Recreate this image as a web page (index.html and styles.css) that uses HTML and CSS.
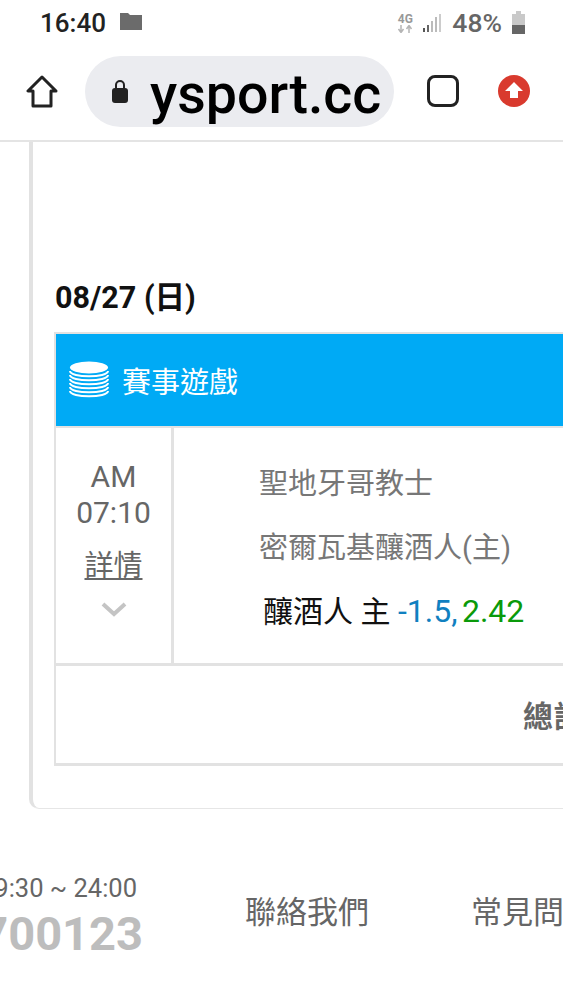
FILE: index.html
```html
<!DOCTYPE html>
<html lang="zh-Hant">
<head>
  <meta charset="UTF-8" />
  <meta name="viewport" content="width=device-width, initial-scale=1.0"/>
  <title>賽事遊戲</title>
  <link rel="stylesheet" href="styles.css">
</head>
<body>
  <div class="status-bar">
    <span class="clock">16:40</span>
    <svg class="folder" width="22" height="18" viewBox="0 0 22 18"><path d="M0 1h8l2 2h12v15H0z" fill="#6b6b6b"/></svg>
    <div class="status-right">
      <div class="net"><span>4G</span><svg width="16" height="8" viewBox="0 0 16 8"><path d="M4 0v7M1.5 4 4 7.5 6.5 4M12 8V1M9.5 4 12 .5 14.5 4" fill="none" stroke="#b5b5b5" stroke-width="1.5"/></svg></div>
      <svg class="signal" width="18" height="20" viewBox="0 0 18 20"><rect x="0" y="15" width="2" height="4" fill="#555"/><rect x="4" y="12" width="2" height="7" fill="#666"/><rect x="8" y="8" width="2" height="11" fill="#bbb"/><rect x="12" y="4" width="2" height="15" fill="#bbb"/><rect x="16" y="1" width="2" height="18" fill="#ccc"/></svg>
      <span class="battery-text">48%</span>
      <svg class="battery" width="15" height="23" viewBox="0 0 15 23"><path d="M5 0h5v3h4v20H1V3h4z" fill="#c9c9c9"/><rect x="1" y="14" width="13" height="9" fill="#666"/></svg>
    </div>
  </div>

  <div class="toolbar">
    <svg class="home" width="32" height="33" viewBox="0 0 32 33"><path d="M16 2 2 16h5v15h18V16h5z" fill="none" stroke="#222" stroke-width="3" stroke-linejoin="round"/></svg>
    <div class="url-bar">
      <svg class="lock" width="18" height="24" viewBox="0 0 18 24"><path d="M5 10V6a4 4 0 0 1 8 0v4" fill="none" stroke="#222" stroke-width="2"/><rect x="1" y="9" width="16" height="15" rx="3" fill="#222"/></svg>
      <span class="url-text">ysport.cc</span>
    </div>
    <div class="tabs-icon"></div>
    <svg class="update" width="32" height="32" viewBox="0 0 32 32"><circle cx="16" cy="16" r="16" fill="#d93a2e"/><path d="M16 7 25 16h-5v7h-8v-7H7z" fill="#fff"/></svg>
  </div>

  <div class="page">
    <div class="card">
      <h3 class="date">08/27 (日)</h3>
      <div class="game-table">
        <div class="game-head">
          <svg width="40" height="38" viewBox="0 0 40 38">
            <ellipse cx="20" cy="6.5" rx="19" ry="6" fill="#fff"/>
            <g fill="none" stroke="#fff" stroke-width="2">
              <path d="M1 10c0 7 38 7 38 0"/>
              <path d="M1 14c0 7 38 7 38 0"/>
              <path d="M1 18c0 7 38 7 38 0"/>
              <path d="M1 22c0 7 38 7 38 0"/>
              <path d="M1 26c0 7 38 7 38 0"/>
              <path d="M1 30c0 7 38 7 38 0"/>
            </g>
          </svg>
          <span>賽事遊戲</span>
        </div>
        <div class="game-row">
          <div class="time-cell">
            <div class="time">AM<br>07:10</div>
            <a class="detail" href="#">詳情</a>
            <svg class="chevron" width="26" height="16" viewBox="0 0 26 16"><path d="M2 3 13 13 24 3" fill="none" stroke="#c4c4c4" stroke-width="4"/></svg>
          </div>
          <div class="info-cell">
            <div class="team">聖地牙哥教士</div>
            <div class="team">密爾瓦基釀酒人(主)</div>
            <div class="pick">釀酒人 主 <span class="spread">-1.5,</span> <span class="odds">2.42</span></div>
          </div>
        </div>
        <div class="total-row"><b>總計</b></div>
      </div>
    </div>
  </div>

  <div class="footer">
    <div class="service">
      <div class="hours">09:30 ~ 24:00</div>
      <div class="phone">0800700123</div>
    </div>
    <a class="foot-link" href="#">聯絡我們</a>
    <a class="foot-link" href="#">常見問題</a>
  </div>
</body>
</html>
```

FILE: styles.css
```css
* {
  box-sizing: border-box;
}

html, body {
  overflow: hidden;
}

body {
  margin: 0;
  width: 563px;
  height: 1000px;
  background: #fff;
  color: #666;
  font-family: Roboto, 'Noto Sans CJK TC', sans-serif;
}

.status-bar {
  height: 44px;
  display: flex;
  align-items: center;
  padding: 1px 37px 0 40px;
}

.clock {
  font-size: 26px;
  font-weight: 500;
  color: #222;
}

.folder {
  margin-left: 14px;
  margin-bottom: 3px;
}

.status-right {
  margin-left: auto;
  display: flex;
  align-items: center;
}

.net {
  display: flex;
  flex-direction: column;
  align-items: center;
  font-size: 12px;
  font-weight: 700;
  line-height: 12px;
  color: #999;
}

.net svg {
  display: block;
}

.signal {
  margin-left: 10px;
}

.battery-text {
  margin-left: 11px;
  font-size: 26.5px;
  font-weight: 500;
  color: #666;
}

.battery {
  margin-left: 9px;
}

.toolbar {
  height: 98px;
  display: flex;
  align-items: center;
  padding: 0 32px 2px 26px;
  border-bottom: 2px solid #e4e4e4;
}

.home {
  flex: none;
}

.url-bar {
  margin-left: 27px;
  width: 309px;
  height: 71px;
  border-radius: 36px;
  background: #ebecf0;
  display: flex;
  align-items: center;
  padding-left: 26px;
  overflow: hidden;
}

.url-text {
  margin-left: 21px;
  margin-top: 6px;
  font-size: 55.5px;
  font-weight: 500;
  line-height: 65px;
  color: #000;
}

.tabs-icon {
  margin-left: 33px;
  width: 32px;
  height: 32px;
  border: 3px solid #222;
  border-radius: 8px;
}

.update {
  margin-left: 39px;
}

.page {
  padding-left: 29px;
}

.card {
  width: 600px;
  height: 667px;
  border-left: 4px solid #e2e2e2;
  border-bottom: 1px solid #e6e6e6;
  border-bottom-left-radius: 10px;
  padding: 140px 0 0 21px;
}

.date {
  margin: 0 0 18px 1px;
  height: 32px;
  font-size: 30.5px;
  line-height: 32px;
  font-weight: 700;
  color: #111;
}

.game-table {
  width: 600px;
  border: 2px solid #e2e2e2;
  border-bottom-width: 3px;
  border-right: 0;
}

.game-head {
  height: 92px;
  background: #00aaf5;
  display: flex;
  align-items: center;
  padding-left: 13px;
  font-size: 29px;
  color: #fff;
}

.game-head span {
  margin-left: 13px;
}

.game-row {
  height: 240px;
  display: flex;
  border-top: 2px solid #e2e2e2;
  border-bottom: 3px solid #e2e2e2;
}

.time-cell {
  width: 118px;
  flex: none;
  border-right: 3px solid #e2e2e2;
  text-align: center;
  padding-top: 31px;
  font-size: 30px;
}

.time {
  line-height: 36px;
}

.detail {
  display: block;
  margin-top: 18px;
  font-size: 29px;
  line-height: 34px;
  color: #666;
}

.chevron {
  display: block;
  margin: 18px auto 0;
}

.info-cell {
  padding: 36px 0 0 85px;
}

.team {
  height: 64px;
  font-size: 29px;
  line-height: 40px;
  color: #777;
}

.pick {
  margin-left: 4px;
  margin-top: -1px;
  font-size: 30px;
  line-height: 40px;
  color: #111;
}

.spread {
  font-size: 32px;
  color: #1080c0;
}

.odds {
  margin-left: -3px;
  font-size: 32px;
  color: #0a9a0a;
}

.total-row {
  height: 97px;
  padding: 31px 0 0 467px;
  font-size: 30px;
  line-height: 40px;
  white-space: nowrap;
}

.footer {
  margin-top: 64px;
  display: flex;
  align-items: center;
}

.service {
  margin-left: -20px;
  width: 163px;
  flex: none;
  text-align: right;
  white-space: nowrap;
}

.hours {
  padding-right: 14px;
  font-size: 25.5px;
  line-height: 30px;
}

.phone {
  margin-top: 4px;
  font-size: 47px;
  line-height: 54px;
  font-weight: 700;
  color: #bdbdbd;
  display: flex;
  justify-content: flex-end;
}

.foot-link {
  font-size: 31px;
  color: #666;
  white-space: nowrap;
  text-decoration: none;
  margin-left: 102px;
  margin-bottom: 16px;
}
```
